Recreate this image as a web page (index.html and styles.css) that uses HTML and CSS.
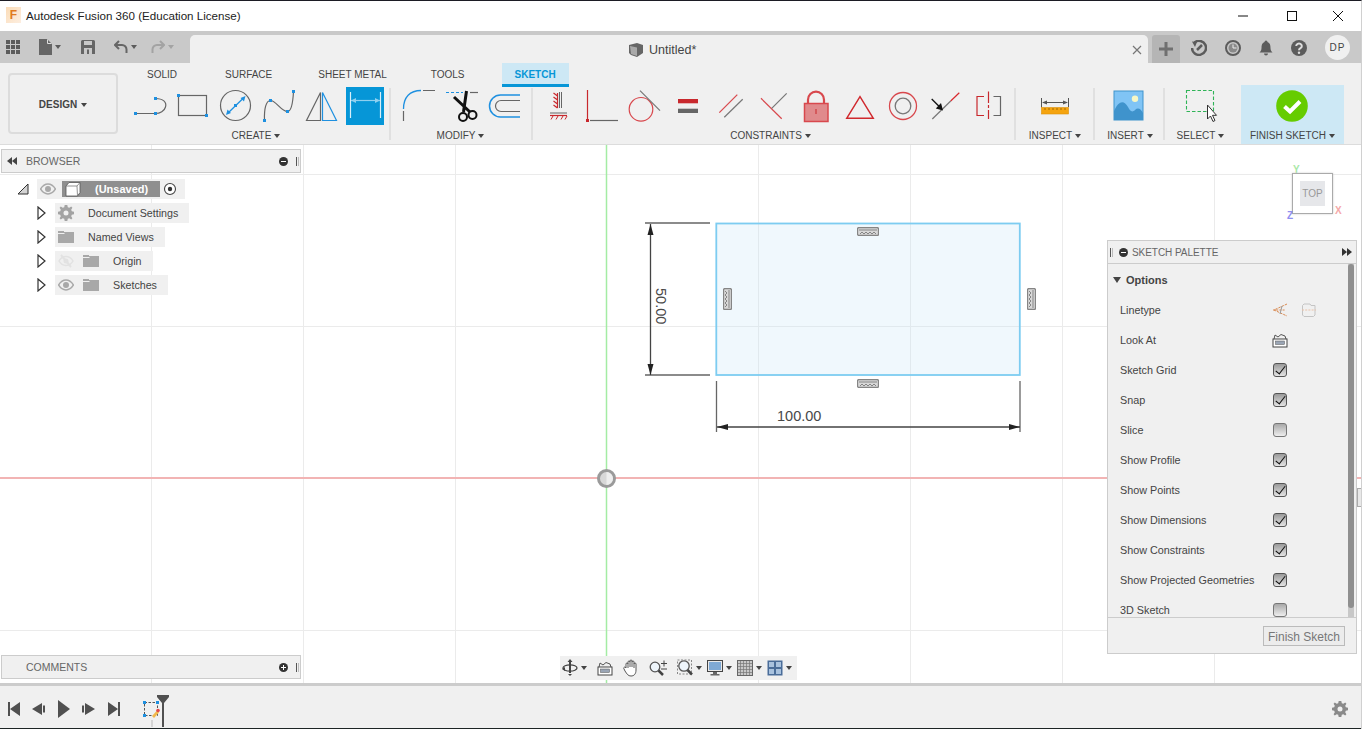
FILE: index.html
```html
<!DOCTYPE html>
<html lang="en">
<head>
<meta charset="utf-8">
<title>Autodesk Fusion 360 (Education License)</title>
<link rel="stylesheet" href="styles.css">
</head>
<body>
<svg class="defs" aria-hidden="true">
  <symbol id="eye" viewBox="0 0 16 12"><path d="M0.5 6C3 2 5.5 1 8 1s5 1 7.500 5C13 10 10.500 11 8 11S3 10 0.500 6Z" fill="none" stroke="#a8a8a8" stroke-width="1.500"/><circle cx="8" cy="6" r="3" fill="#a8a8a8"/></symbol>
  <symbol id="eyeoff" viewBox="0 0 16 14"><path d="M1 7C3 3.500 5.500 2.500 8 2.500s5 1 7 4.500C13 10.500 10.500 11.500 8 11.500S3 10.500 1 7Z" fill="none" stroke="#e2e2e2" stroke-width="1.500"/><circle cx="8" cy="7" r="2.500" fill="#e2e2e2"/><path d="M3 1l10 12" stroke="#e2e2e2" stroke-width="2"/></symbol>
  <symbol id="folder" viewBox="0 0 16 12"><path d="M0 0H6V1H16V3H7L6 2H0Z" fill="#a8a8a8"/><path d="M0 3H16V12H0Z" fill="#a8a8a8"/></symbol>
  <symbol id="lookat" viewBox="0 0 16 16"><path d="M2 7L3 3L6 5L9 2.500L13 4L14 7" fill="none" stroke="#555" stroke-width="1"/><rect x="1" y="7" width="14" height="8" fill="#fff" stroke="#444"/><rect x="3.500" y="9" width="9" height="3.500" fill="#9aa5b5" stroke="#555" stroke-width="0.500"/></symbol>
  <symbol id="tick" viewBox="0 0 22 9"><rect x="0.500" y="0.500" width="21" height="8" rx="1.500" fill="#d8d8d8" stroke="#858585" stroke-width="1.300"/><path d="M2 3H20" stroke="#858585"/><path d="M3 7l2-2 2 2 2-2 2 2 2-2 2 2 2-2 2 2" fill="none" stroke="#858585" stroke-width="1"/></symbol>
</svg>

<div class="app">
  <header class="titlebar">
    <span class="app-logo">F</span>
    <span class="app-title">Autodesk Fusion 360 (Education License)</span>
    <div class="win-controls">
      <svg class="win-min" width="12" height="12" viewBox="0 0 12 12"><path d="M1 6H11" stroke="#111"/></svg>
      <svg class="win-max" width="12" height="12" viewBox="0 0 12 12"><rect x="1.500" y="1.500" width="9" height="9" fill="none" stroke="#111"/></svg>
      <svg class="win-close" width="12" height="12" viewBox="0 0 12 12"><path d="M1 1L11 11M11 1L1 11" stroke="#111"/></svg>
    </div>
  </header>

  <div class="quickbar">
    <div class="qa">
      <svg class="qa-grid" width="14" height="14" viewBox="0 0 14 14" fill="#5c5c5c"><path d="M0 0h4v4H0zM5 0h4v4H5zM10 0h4v4h-4zM0 5h4v4H0zM5 5h4v4H5zM10 5h4v4h-4zM0 10h4v4H0zM5 10h4v4H5zM10 10h4v4h-4z"/></svg>
      <svg class="qa-file" width="13" height="16" viewBox="0 0 13 16"><path d="M0 0H8L13 5V16H0Z" fill="#666"/><path d="M8.500 0.500V4.500H12.500" fill="none" stroke="#ddd"/></svg>
      <span class="caret qa-caret"></span>
      <svg class="qa-save" width="14" height="14" viewBox="0 0 14 14"><path d="M0 1.500A1.500 1.500 0 0 1 1.500 0H12.500A1.500 1.500 0 0 1 14 1.500V14H0Z" fill="#666"/><rect x="3" y="1" width="8" height="4" fill="#c9c9c9"/><rect x="3" y="8" width="8" height="6" fill="#c9c9c9"/><rect x="6" y="9.500" width="2" height="4.500" fill="#666"/></svg>
      <svg class="qa-undo" width="14" height="14" viewBox="0 0 14 14"><path d="M5 1L1 5L5 9M1 5H8A4.500 4.500 0 0 1 12.500 9.500V13" fill="none" stroke="#666" stroke-width="2"/></svg>
      <span class="caret qa-caret"></span>
      <svg class="qa-redo" width="14" height="14" viewBox="0 0 14 14"><path d="M9 1L13 5L9 9M13 5H6A4.500 4.500 0 0 0 1.500 9.500V13" fill="none" stroke="#a3a3a3" stroke-width="2"/></svg>
      <span class="caret caret-dim qa-caret"></span>
    </div>
    <div class="doc-tab">
      <svg class="doc-cube" width="16" height="16" viewBox="0 0 16 16"><path d="M1 3L9 1L15 3L15 11L9 15L3 13L1 11Z" fill="#666"/><path d="M2 4L9 5.500V14L3 12Z" fill="#a9a9a9"/></svg>
      <span class="doc-name">Untitled*</span>
      <svg class="doc-close" width="10" height="10" viewBox="0 0 10 10"><path d="M1 1L9 9M9 1L1 9" stroke="#777" stroke-width="1.200"/></svg>
    </div>
    <div class="new-tab"><svg width="14" height="14" viewBox="0 0 14 14"><path d="M7 0V14M0 7H14" stroke="#707070" stroke-width="3"/></svg></div>
    <svg class="top-icon top-first" width="16" height="16" viewBox="0 0 16 16"><path d="M3.500 2.500A7 7 0 1 1 1 8" fill="none" stroke="#5c5c5c" stroke-width="2.500"/><path d="M1 1.500L6 2L4 7Z" fill="#5c5c5c"/><path d="M6 10L11 5" stroke="#5c5c5c" stroke-width="2.500"/></svg>
    <svg class="top-icon" width="16" height="16" viewBox="0 0 16 16"><circle cx="8" cy="8" r="7" fill="none" stroke="#5c5c5c" stroke-width="2"/><circle cx="8" cy="8" r="4.500" fill="#8a8a8a"/><path d="M8 4.500V8H11.500" fill="none" stroke="#eee"/></svg>
    <svg class="top-icon" width="16" height="16" viewBox="0 0 16 16"><path d="M8 0.500A1.500 1.500 0 0 1 9.500 2C12 3 12.500 5 12.500 8C12.500 10 13.500 11.500 14.500 12.500H1.500C2.500 11.500 3.500 10 3.500 8C3.500 5 4 3 6.500 2A1.500 1.500 0 0 1 8 0.500ZM6 13.500H10A2 2 0 0 1 6 13.500Z" fill="#5c5c5c"/></svg>
    <svg class="top-icon" width="16" height="16" viewBox="0 0 16 16"><circle cx="8" cy="8" r="8" fill="#5c5c5c"/><path d="M5.200 6A2.800 2.500 0 1 1 9.500 8.200C8.500 8.800 8 9.200 8 10.200" fill="none" stroke="#ddd" stroke-width="2"/><circle cx="8" cy="12.700" r="1.200" fill="#ddd"/></svg>
    <span class="avatar">DP</span>
  </div>

  <nav class="ribbon">
    <button class="design-btn">DESIGN<span class="caret caret-design"></span></button>
    <div class="ribbon-main">
      <div class="tabs">
        <span class="tab">SOLID</span>
        <span class="tab">SURFACE</span>
        <span class="tab">SHEET METAL</span>
        <span class="tab">TOOLS</span>
        <span class="tab tab-active">SKETCH</span>
      </div>
      <div class="groups">
        <div class="group">
          <div class="tools">
            <svg class="tool" viewBox="0 0 38 38"><path d="M4.500 26.500H24.500M24.500 11.500C32 11.500 36 15 34.500 20C33.500 24 29 26.500 24.500 26.500" fill="none" stroke="#666" stroke-width="1.200"/><path class="blue" d="M3 25h3v3H3zM23 25h3v3h-3zM23 10h3v3h-3z"/></svg>
            <svg class="tool" viewBox="0 0 38 38"><rect x="4.500" y="8.500" width="28" height="20" fill="none" stroke="#666" stroke-width="1.200"/><path class="blue" d="M3 7h3v3H3zM31 27h3v3h-3z"/></svg>
            <svg class="tool" viewBox="0 0 38 38"><circle cx="18.500" cy="18.500" r="15" fill="none" stroke="#666" stroke-width="1.200"/><path d="M11 26L26.500 11" stroke="#1e90e0" stroke-width="1.300"/><path class="blue" d="M9 28L10.500 22.500L14 26ZM28.500 9L27 14.500L23.500 11ZM17 17h3v3h-3z"/></svg>
            <svg class="tool" viewBox="0 0 38 38"><path d="M4.500 33.500C4 22 6 13.500 10.500 13.500C16 13.500 21 24.500 27.500 24.500C32 24.500 33 14 33.500 4.500" fill="none" stroke="#666" stroke-width="1.200"/><path class="blue" d="M3 32h3v3H3zM9 12h3v3H9zM26 23h3v3h-3zM32 3h3v3h-3z"/></svg>
            <svg class="tool" viewBox="0 0 38 38"><path d="M17.500 5.500L3.500 33.500H17.500Z" fill="none" stroke="#666" stroke-width="1.200"/><path d="M19.500 5.500L33.500 33.500H19.500Z" fill="none" stroke="#1e90e0" stroke-width="1.200"/></svg>
            <svg class="tool tool-active" viewBox="0 0 38 38"><rect width="38" height="38" fill="#0696d7"/><path d="M4.500 5V31M34.500 5V31" stroke="#d7eef9" stroke-width="1.200"/><path d="M5 13.500H34" stroke="#8fd0ef" stroke-width="1.200"/><path d="M5 13.500L10 11V16ZM34 13.500L29 11V16Z" fill="#8fd0ef"/></svg>
          </div>
          <div class="group-label">CREATE<span class="caret"></span></div>
        </div>
        <span class="sep sep-a"></span>
        <div class="group">
          <div class="tools">
            <svg class="tool" viewBox="0 0 38 38"><path d="M3.500 34V24M23 3.500H35" fill="none" stroke="#666" stroke-width="1.200"/><path d="M3.500 22C3.500 10 10 3.500 21 3.500" fill="none" stroke="#1e90e0" stroke-width="1.300"/></svg>
            <svg class="tool" viewBox="0 0 38 38"><path d="M3 5.500H20" fill="none" stroke="#1e90e0" stroke-width="1.200" stroke-dasharray="3 2"/><path d="M27 5.500H35" stroke="#666" stroke-width="1.200"/><path d="M11 10L27 25M23.500 4L20.500 25" fill="none" stroke="#111" stroke-width="3"/><circle cx="20" cy="30" r="4" fill="none" stroke="#111" stroke-width="2"/><circle cx="29.500" cy="28" r="4" fill="none" stroke="#111" stroke-width="2"/></svg>
            <svg class="tool" viewBox="0 0 38 38"><path d="M34 8H14.500A11 11 0 0 0 14.500 30H34" fill="none" stroke="#1e90e0" stroke-width="1.500"/><path d="M34 13.500H15A5.500 5.500 0 0 0 15 24.500H34" fill="none" stroke="#666" stroke-width="1.200"/></svg>
          </div>
          <div class="group-label">MODIFY<span class="caret"></span></div>
        </div>
        <span class="sep sep-b"></span>
        <div class="group group-constraints">
          <div class="tools">
            <svg class="tool" viewBox="0 0 38 38"><path d="M14.500 6l4 3M14.500 10l4 3M14.500 14l4 3M14.500 18l4 3M18.500 6V21" fill="none" stroke="#c8282d" stroke-width="1.200"/><path d="M20.500 5V21M22.500 5V21M11 26H28" stroke="#666" stroke-width="1"/><path d="M11 28.500H28" stroke="#c8282d" stroke-width="1.200"/><path d="M14 29l-2 3.500M19 29l-2 3.500M24 29l-2 3.500M28 29l-2 3.500" stroke="#c8282d"/></svg>
            <svg class="tool" viewBox="0 0 38 38"><path d="M5.500 3V32" stroke="#c8282d" stroke-width="1.200"/><path d="M4 32h3v3H4z" fill="#c8282d"/><path d="M8 33.500H36" stroke="#666" stroke-width="1.200"/></svg>
            <svg class="tool" viewBox="0 0 38 38"><circle cx="16" cy="22.300" r="11.800" fill="none" stroke="#d8484d" stroke-width="1.200"/><path d="M15 3.700L35 23.700" stroke="#777" stroke-width="1.200"/></svg>
            <svg class="tool" viewBox="0 0 38 38"><path d="M10 12h20v4.300H10z" fill="#c8282d"/><path d="M10 21.700h20v4.300H10z" fill="#666"/></svg>
            <svg class="tool" viewBox="0 0 38 38"><path d="M8.300 25.700L26.300 7.700" stroke="#d8484d" stroke-width="1.200"/><path d="M13.300 30.300L31.700 12.300" stroke="#777" stroke-width="1.200"/></svg>
            <svg class="tool" viewBox="0 0 38 38"><path d="M7 11.300L27.700 31.700" stroke="#d8484d" stroke-width="1.200"/><path d="M17.700 21.300L32.700 6.300" stroke="#777" stroke-width="1.200"/></svg>
            <svg class="tool" viewBox="0 0 38 38"><path d="M11 16V12.700A8 8 0 0 1 27 12.700V16" fill="none" stroke="#d8484d" stroke-width="2.200"/><rect x="7.500" y="16.500" width="23.500" height="18" fill="#e08a8c" stroke="#d8484d" stroke-width="1.500"/><path d="M19 22V27" stroke="#c8282d"/></svg>
            <svg class="tool" viewBox="0 0 38 38"><path d="M6.700 31.300H33.300L20 9.700Z" fill="none" stroke="#d0282d" stroke-width="1.400"/></svg>
            <svg class="tool" viewBox="0 0 38 38"><circle cx="20" cy="19" r="13.500" fill="none" stroke="#d8484d" stroke-width="1.300"/><circle cx="20" cy="19" r="7.800" fill="none" stroke="#777" stroke-width="1.300"/></svg>
            <svg class="tool" viewBox="0 0 38 38"><path d="M6.300 32L24.700 14" stroke="#777" stroke-width="1.200"/><path d="M24.700 14L33.300 5.700" stroke="#d8282d" stroke-width="1.200"/><path d="M5.700 12L14 20.300" stroke="#111" stroke-width="1.300"/><path d="M17 23.500L9.800 21.500L15 16Z" fill="#111"/></svg>
            <svg class="tool" viewBox="0 0 38 38"><path d="M15 9.500H8V28.500H15" fill="none" stroke="#c8282d" stroke-width="1.200"/><path d="M24.500 9.500H31.500V28.500H24.500" fill="none" stroke="#666" stroke-width="1.200"/><path d="M19.500 4.500V16M19.500 18V21M19.500 23V32" stroke="#c8282d" stroke-width="1.200"/></svg>
          </div>
          <div class="group-label">CONSTRAINTS<span class="caret"></span></div>
        </div>
        <span class="sep sep-c"></span>
        <div class="group group-inspect">
          <svg class="tool" viewBox="0 0 38 38"><path d="M5.500 11V20M32.500 11V20M7 15.500H31" fill="none" stroke="#555" stroke-width="1"/><path d="M6 15.500L11 13.500V17.500ZM32 15.500L27 13.500V17.500Z" fill="#555"/><rect x="5.500" y="20.500" width="27" height="6.500" fill="#f5a40f" stroke="#dd8f08" stroke-width="0.600"/><path d="M9 21V23M13 21V23M17 21V23M21 21V23M25 21V23M29 21V23" stroke="#8a5a00" stroke-width="0.800"/></svg>
          <div class="group-label">INSPECT<span class="caret"></span></div>
        </div>
        <span class="sep sep-d"></span>
        <div class="group group-insert">
          <svg class="tool" viewBox="0 0 38 38"><rect x="3" y="4" width="29" height="29" fill="#80c4f5" stroke="#3f93cc"/><circle cx="24" cy="11.800" r="3.200" fill="#f7f7c5"/><path d="M3 24C8 13 13 13 17 20C19 24 21 26 24 23C27 20 30 22 32 26V33H3Z" fill="#3f93cc"/></svg>
          <div class="group-label">INSERT<span class="caret"></span></div>
        </div>
        <span class="sep sep-e"></span>
        <div class="group group-select">
          <svg class="tool" viewBox="0 0 38 38"><rect x="4.500" y="3.500" width="27" height="21" fill="none" stroke="#2fb457" stroke-width="1.100" stroke-dasharray="3.500 2"/><path d="M25.500 18V32L28.500 29L31 34.500L33 33.500L30.500 28.300H34.500Z" fill="#fff" stroke="#333" stroke-width="1"/></svg>
          <div class="group-label">SELECT<span class="caret"></span></div>
        </div>
        <div class="finish">
          <svg class="finish-icon" width="32" height="32" viewBox="0 0 32 32"><circle cx="16" cy="16" r="15.800" fill="#66cc00"/><path d="M8.500 16.500L14 21.500L24 11.500" fill="none" stroke="#fff" stroke-width="4"/></svg>
          <div class="group-label">FINISH SKETCH<span class="caret"></span></div>
        </div>
      </div>
    </div>
  </nav>

  <main class="viewport">
    <svg class="canvas" width="1361" height="538" viewBox="0 145 1361 538">
      <g stroke="#ebebeb" stroke-width="1">
        <path d="M151.500 145V683M303.500 145V683M455.500 145V683M758.500 145V683M910.500 145V683M1062.500 145V683M1214.500 145V683"/>
        <path d="M0 174.500H1361M0 326.500H1361M0 630.500H1361"/>
      </g>
      <path d="M0 478H1361" stroke="#f2b4b4" stroke-width="2"/>
      <path d="M606.500 145V683" stroke="#a4eca4" stroke-width="1.500"/>
      <circle cx="606.500" cy="478.500" r="8" fill="#d8d8d8" stroke="#9a9a9a" stroke-width="3"/>
      <path d="M606.500 472A6.500 6.500 0 0 1 606.500 485Z" fill="#eee"/>

      <rect x="716.300" y="223.500" width="303.500" height="151.500" fill="#bfe1f7" fill-opacity="0.240" stroke="#7dccf1" stroke-width="1.800"/>

      <g stroke="#666" stroke-width="1.300" fill="none">
        <path d="M645 223H710M645 375H710"/>
        <path d="M716.500 381V432M1020 381V432"/>
      </g>
      <path d="M650.500 224V375M717 427H1020" stroke="#444" stroke-width="1.300" fill="none"/>
      <path d="M650.500 224L653.500 235H647.500ZM650.500 375L653.500 364H647.500ZM717 427L728 424V430ZM1020 427L1009 424V430Z" fill="#222"/>
      <text class="dim" x="777" y="421">100.00</text>
      <text class="dim" transform="translate(656 288) rotate(90)">50.00</text>
      <use href="#tick" x="857" y="227" width="22" height="9"/>
      <use href="#tick" x="857" y="379" width="22" height="9"/>
      <use href="#tick" transform="translate(732 288) rotate(90)" width="22" height="9"/>
      <use href="#tick" transform="translate(1036 288) rotate(90)" width="22" height="9"/>
    </svg>

    <section class="panel browser">
      <div class="panel-head">
        <svg width="10" height="8" viewBox="0 0 10 8" class="rewind"><path d="M5 0V8L0 4ZM10 0V8L5 4Z" fill="#444"/></svg>
        <span class="panel-title">BROWSER</span>
        <span class="round-btn"></span>
        <span class="grip"></span>
      </div>
      <div class="tree">
        <div class="tree-row tree-root">
          <svg class="twist" width="12" height="12" viewBox="0 0 12 12"><path d="M1 11L11 1V11Z" fill="#d4d4d4" stroke="#333"/></svg>
          <div class="chip chip-root">
            <svg class="ic" width="16" height="12"><use href="#eye"/></svg>
            <div class="chip-sel">
              <svg width="16" height="16" viewBox="0 0 16 16"><path d="M1 5L4 1.500H15V11.500L12.500 15H1Z" fill="#fff" stroke="#555" stroke-width="0.800"/><path d="M1 5H12L12.500 15M12 5L15 1.500" fill="none" stroke="#777" stroke-width="0.800"/></svg>
              <span class="root-name">(Unsaved)</span>
            </div>
          </div>
          <svg class="radio" width="14" height="14" viewBox="0 0 14 14"><circle cx="7" cy="7" r="5.500" fill="#fff" stroke="#444" stroke-width="1.100"/><circle cx="7" cy="7" r="2.200" fill="#333"/></svg>
        </div>
        <div class="tree-row">
          <svg class="twist-r" width="9" height="14" viewBox="0 0 9 14"><path d="M1 1L8 7L1 13Z" fill="#fff" stroke="#333" stroke-width="1.200"/></svg>
          <div class="chip">
            <svg class="ic" width="16" height="16" viewBox="0 0 16 16"><path d="M6.700 0H9.300L9.800 2.200L11.300 2.800L13.200 1.600L14.400 2.800L13.200 4.700L13.800 6.200L16 6.700V9.300L13.800 9.800L13.200 11.300L14.400 13.200L13.200 14.400L11.300 13.200L9.800 13.800L9.300 16H6.700L6.200 13.800L4.700 13.200L2.800 14.400L1.600 13.200L2.800 11.300L2.200 9.800L0 9.300V6.700L2.200 6.200L2.800 4.700L1.600 2.800L2.800 1.600L4.700 2.800L6.200 2.200ZM8 5.500A2.500 2.500 0 1 0 8 10.500A2.500 2.500 0 1 0 8 5.500Z" fill="#a3a3a3" fill-rule="evenodd"/></svg>
            <span class="chip-text">Document Settings</span>
          </div>
        </div>
        <div class="tree-row">
          <svg class="twist-r" width="9" height="14" viewBox="0 0 9 14"><path d="M1 1L8 7L1 13Z" fill="#fff" stroke="#333" stroke-width="1.200"/></svg>
          <div class="chip">
            <svg class="ic" width="16" height="12"><use href="#folder"/></svg>
            <span class="chip-text">Named Views</span>
          </div>
        </div>
        <div class="tree-row">
          <svg class="twist-r" width="9" height="14" viewBox="0 0 9 14"><path d="M1 1L8 7L1 13Z" fill="#fff" stroke="#333" stroke-width="1.200"/></svg>
          <div class="chip">
            <svg class="ic" width="16" height="14"><use href="#eyeoff"/></svg>
            <svg class="ic ic-second" width="16" height="12"><use href="#folder"/></svg>
            <span class="chip-text">Origin</span>
          </div>
        </div>
        <div class="tree-row">
          <svg class="twist-r" width="9" height="14" viewBox="0 0 9 14"><path d="M1 1L8 7L1 13Z" fill="#fff" stroke="#333" stroke-width="1.200"/></svg>
          <div class="chip">
            <svg class="ic" width="16" height="12"><use href="#eye"/></svg>
            <svg class="ic ic-second" width="16" height="12"><use href="#folder"/></svg>
            <span class="chip-text">Sketches</span>
          </div>
        </div>
      </div>
    </section>

    <section class="panel comments">
      <div class="panel-head">
        <span class="panel-title panel-title-c">COMMENTS</span>
        <span class="round-btn round-plus"></span>
        <span class="grip"></span>
      </div>
    </section>

    <div class="navbar">
      <div class="nav-item">
        <svg width="16" height="18" viewBox="0 0 16 18"><path d="M8 0L10.500 3H9V14H7V3H5.500ZM8 17L6 15H10Z" fill="#444"/><ellipse cx="8" cy="9" rx="7" ry="3.200" fill="none" stroke="#444" stroke-width="1.300"/><path d="M0 10L3 8V12Z" fill="#444"/></svg><span class="caret"></span>
      </div>
      <div class="nav-item nav-wide"><svg width="16" height="16"><use href="#lookat"/></svg></div>
      <div class="nav-item nav-wide"><svg width="16" height="18" viewBox="0 0 16 18"><path d="M3 9V5A1 1 0 0 1 5 5V3A1 1 0 0 1 7 3V2A1 1 0 0 1 9 2V3A1 1 0 0 1 11 3V5A1 1 0 0 1 13 5V11C13 15 11 17 8 17C5 17 4 15 2 12L0.800 9.500C0.500 8 2 7.500 3 9ZM5 5V9M7 3V8M9 3V8M11 5V9" fill="#fff" stroke="#444" stroke-width="0.900"/></svg></div>
      <div class="nav-item nav-wide"><svg width="18" height="16" viewBox="0 0 18 16"><circle cx="6" cy="7" r="4.800" fill="#eef5fb" stroke="#555" stroke-width="1.300"/><path d="M9.500 10.500L14 15" stroke="#444" stroke-width="2.500"/><path d="M12 3.500H18M15 0.500V6.500M12 9H18" stroke="#444"/></svg></div>
      <div class="nav-item nav-wide"><svg width="16" height="18" viewBox="0 0 16 18"><rect x="0.500" y="1" width="14" height="14" fill="none" stroke="#888" stroke-dasharray="2 1.500"/><circle cx="7" cy="7" r="5.200" fill="#eef5fb" stroke="#555" stroke-width="1.300"/><path d="M10.500 11L15 15.500" stroke="#444" stroke-width="2.500"/></svg><span class="caret"></span></div>
      <div class="nav-item"><svg width="16" height="16" viewBox="0 0 16 16"><rect x="0.500" y="0.500" width="15" height="11" fill="#e8e8e8" stroke="#444"/><rect x="2" y="2" width="12" height="8" fill="#7fa9d4"/><path d="M6 12H10V14H12.500V15.500H3.500V14H6Z" fill="#666"/></svg><span class="caret"></span></div>
      <div class="nav-item"><svg width="16" height="16" viewBox="0 0 16 16"><rect x="0.500" y="0.500" width="15" height="15" fill="#c8c8c8" stroke="#666"/><path d="M3.500 1V15M6.500 1V15M9.500 1V15M12.500 1V15M1 3.500H15M1 6.500H15M1 9.500H15M1 12.500H15" stroke="#777" stroke-width="0.700"/></svg><span class="caret"></span></div>
      <div class="nav-item"><svg width="16" height="16" viewBox="0 0 16 16"><rect x="0.500" y="0.500" width="15" height="15" fill="#4a6d99"/><g fill="#a9c2de" stroke="#4a6d99"><rect x="1.500" y="1.500" width="6" height="6"/><rect x="8.500" y="1.500" width="6" height="6"/><rect x="1.500" y="8.500" width="6" height="6"/><rect x="8.500" y="8.500" width="6" height="6"/></g></svg><span class="caret"></span></div>
    </div>

    <div class="viewcube">
      <span class="axis axis-y">Y</span>
      <div class="cube-face"><span class="cube-top">TOP</span></div>
      <span class="axis axis-z">Z</span>
      <span class="axis axis-x">X</span>
    </div>

    <section class="palette">
      <div class="palette-head">
        <span class="grip grip-left"></span>
        <span class="round-btn"></span>
        <span class="panel-title palette-title">SKETCH PALETTE</span>
        <svg class="forward" width="10" height="8" viewBox="0 0 10 8"><path d="M0 0V8L5 4ZM5 0V8L10 4Z" fill="#333"/></svg>
      </div>
      <div class="palette-body">
        <div class="palette-list">
          <div class="opt-head"><span class="opt-tri"></span>Options</div>
          <div class="opt"><span class="opt-label">Linetype</span>
            <span class="opt-ctl">
              <svg width="16" height="16" viewBox="0 0 16 16"><path d="M15 2L2 8L15 14" fill="none" stroke="#d98a52" stroke-dasharray="2.500 1"/><path d="M1 8H13" stroke="#d98a52" stroke-dasharray="2 1.200"/><path d="M10 4L8 12" stroke="#999"/></svg>
              <svg class="opt-second" width="16" height="16" viewBox="0 0 16 16"><path d="M3 2H9L10 3.500H14V13L12.500 14.500H3L1.500 13V3.500Z" fill="none" stroke="#c4c4c4"/><path d="M1 8H15" stroke="#eac2a8" stroke-dasharray="2 1.200"/></svg>
            </span>
          </div>
          <div class="opt"><span class="opt-label">Look At</span><span class="opt-ctl"><svg width="16" height="16"><use href="#lookat"/></svg></span></div>
          <div class="opt"><span class="opt-label">Sketch Grid</span><span class="opt-ctl"><span class="check on"></span></span></div>
          <div class="opt"><span class="opt-label">Snap</span><span class="opt-ctl"><span class="check on"></span></span></div>
          <div class="opt"><span class="opt-label">Slice</span><span class="opt-ctl"><span class="check"></span></span></div>
          <div class="opt"><span class="opt-label">Show Profile</span><span class="opt-ctl"><span class="check on"></span></span></div>
          <div class="opt"><span class="opt-label">Show Points</span><span class="opt-ctl"><span class="check on"></span></span></div>
          <div class="opt"><span class="opt-label">Show Dimensions</span><span class="opt-ctl"><span class="check on"></span></span></div>
          <div class="opt"><span class="opt-label">Show Constraints</span><span class="opt-ctl"><span class="check on"></span></span></div>
          <div class="opt"><span class="opt-label">Show Projected Geometries</span><span class="opt-ctl"><span class="check on"></span></span></div>
          <div class="opt"><span class="opt-label">3D Sketch</span><span class="opt-ctl"><span class="check"></span></span></div>
        </div>
        <div class="scroll-track"><div class="scroll-thumb"></div></div>
      </div>
      <div class="palette-foot"><span class="finish-btn">Finish Sketch</span></div>
    </section>
    <span class="edge-tab"></span>
  </main>

  <footer class="timeline">
    <div class="tl-controls">
      <svg width="12" height="14" viewBox="0 0 12 14"><path d="M0 0H2V14H0ZM12 0V14L2 7Z" fill="#505050"/></svg>
      <svg class="tl-prev" width="13" height="12" viewBox="0 0 13 12"><path d="M10 0V12L0 6ZM11 2.500H13V9.500H11Z" fill="#505050"/></svg>
      <svg class="tl-play" width="12" height="18" viewBox="0 0 12 18"><path d="M0 0L12 9L0 18Z" fill="#505050"/></svg>
      <svg class="tl-next" width="13" height="12" viewBox="0 0 13 12"><path d="M3 0V12L13 6ZM0 2.500H2V9.500H0Z" fill="#505050"/></svg>
      <svg class="tl-last" width="12" height="14" viewBox="0 0 12 14"><path d="M12 0H10V14H12ZM0 0V14L10 7Z" fill="#505050"/></svg>
    </div>
    <div class="tl-track">
      <svg width="28" height="36" viewBox="0 0 28 36"><rect x="2.500" y="10.500" width="13" height="13" fill="none" stroke="#555" stroke-dasharray="2.500 1.500"/><path d="M1 9h3v3H1zM14 9h3v3h-3zM1 22h3v3H1z" fill="#1e90e0"/><path d="M10 24L15 18.500L17 20.500L12 26Z" fill="#f2b84b"/><circle cx="16" cy="18.500" r="1.800" fill="#e24a4a"/><path d="M9 28H11V35H9Z" fill="#d4d4d4"/><path d="M15 3H27V5L22 11V35H20V11L15 5Z" fill="#505050"/></svg>
    </div>
    <svg class="tl-gear" width="16" height="16" viewBox="0 0 16 16"><path d="M6.700 0H9.300L9.800 2.200L11.300 2.800L13.200 1.600L14.400 2.800L13.200 4.700L13.800 6.200L16 6.700V9.300L13.800 9.800L13.200 11.300L14.400 13.200L13.200 14.400L11.300 13.200L9.800 13.800L9.300 16H6.700L6.200 13.800L4.700 13.200L2.800 14.400L1.600 13.200L2.800 11.300L2.200 9.800L0 9.300V6.700L2.200 6.200L2.800 4.700L1.600 2.800L2.800 1.600L4.700 2.800L6.200 2.200ZM8 5.500A2.500 2.500 0 1 0 8 10.500A2.500 2.500 0 1 0 8 5.500Z" fill="#8a8a8a" fill-rule="evenodd"/></svg>
  </footer>
</div>
</body>
</html>
```

FILE: styles.css
```css
* { box-sizing: border-box; }
html, body { margin: 0; padding: 0; height: 100%; overflow: hidden; background: #fff; }
body { font-family: "Liberation Sans", Arial, sans-serif; color: #444; font-size: 11px; }
.defs { position: absolute; width: 0; height: 0; }
svg { display: block; flex: none; }

.app {
  width: 1362px; height: 729px; display: flex; flex-direction: column;
  border-top: 1px solid #1c1c24; border-right: 1px solid #d0d0d0;
}

/* title bar */
.titlebar { height: 30px; flex: none; display: flex; align-items: center; background: #fff; padding: 0 0 2px 6px; }
.app-logo {
  width: 15px; height: 16px; margin-right: 5px; background: linear-gradient(135deg, #fbdcb8, #fdeee0);
  color: #e07a1e; font-weight: 700; font-size: 12px; line-height: 16px; text-align: center;
}
.app-title { font-size: 11.600px; color: #222; white-space: nowrap; }
.win-controls { margin-left: auto; display: flex; align-items: center; padding-right: 17px; position: relative; top: 1px; }
.win-max { margin-left: 37px; }
.win-close { margin-left: 34px; }

/* quick access + document tab */
.quickbar { height: 32px; flex: none; display: flex; align-items: flex-end; background: #c9c9c9; }
.qa { width: 190px; height: 32px; display: flex; align-items: center; padding-left: 6px; flex: none; }
.qa-file { margin-left: 19px; }
.qa-caret { margin: 0 0 0 6px; }
.qa-save { margin-left: 20px; }
.qa-undo { margin-left: 19px; }
.qa-redo { margin-left: 14px; }
.caret {
  display: inline-block; width: 0; height: 0; flex: none; border-left: 3px solid transparent; border-right: 3px solid transparent;
  border-top: 4px solid #444; margin-left: 3px; vertical-align: 1px;
}
.qa .caret { border-top-color: #5c5c5c; }
.qa .caret-dim { border-top-color: #a3a3a3; }
.doc-tab {
  width: 958px; height: 28px; background: #f0f0f0; border-radius: 5px 5px 0 0; display: flex; align-items: center;
  padding: 1px 0 0 438px; flex: none;
}
.doc-name { font-size: 12.500px; color: #444; margin-left: 5px; }
.doc-close { margin-left: auto; margin-right: 6px; }
.new-tab {
  width: 28px; height: 28px; background: #b5b5b5; border-radius: 3px 3px 0 0; margin-left: 4px; flex: none;
  display: flex; align-items: center; justify-content: center;
}
.top-icon { margin-left: 17px; align-self: center; margin-top: 1px; }
.top-first { margin-left: 11px; }
.top-first + .top-icon { margin-left: 18px; }
.avatar {
  width: 25px; height: 25px; border-radius: 50%; background: #f0f0f0; margin-left: 18px; align-self: center;
  display: flex; align-items: center; justify-content: center; font-size: 10px; letter-spacing: 1px; color: #444;
}

/* ribbon */
.ribbon { height: 82px; flex: none; background: #f0f0f0; border-bottom: 1px solid #dcdcdc; display: flex; align-items: flex-start; }
.design-btn {
  width: 110px; height: 61px; margin: 10px 13px 0 8px; background: #f0f0f0; border: 2px solid #dcdcdc; border-radius: 4px;
  font: 700 10px "Liberation Sans", Arial, sans-serif; color: #444; flex: none; padding: 2px 0 0;
}
.caret-design { margin-left: 4px; }
.ribbon-main { flex: 1; display: flex; flex-direction: column; min-width: 0; }
.tabs { height: 24px; display: flex; gap: 20px; margin-left: 3px; flex: none; }
.tab { padding: 0 13px; font-size: 10px; line-height: 24px; color: #444; white-space: nowrap; }
.tab:nth-child(2) { margin-left: 2px; }
.tab:nth-child(4) { margin-left: -2px; }
.tab:nth-child(5) { margin-left: 4px; }
.tab-active { background: #cde8f5; color: #0696d7; font-weight: 700; border-bottom: 3px solid #0696d7; }
.groups { display: flex; align-items: flex-start; height: 57px; }
.group { display: flex; flex-direction: column; align-items: center; flex: none; }
.tools { display: flex; gap: 5px; }
.tool { width: 38px; height: 38px; }
.blue { fill: #1e90e0; }
.group-label { margin-top: 5px; height: 12px; font-size: 10px; line-height: 12px; color: #444; white-space: nowrap; padding-right: 3px; }
.group-constraints .group-label { padding-right: 5px; }
.group-inspect .group-label, .group-insert .group-label, .group-select .group-label { padding-right: 0; }
.sep { width: 2px; height: 52px; background: #e0e0e0; flex: none; }
.sep-a { margin: 1px 9px 0 5px; }
.sep-b { margin: 1px 6px 0 7px; }
.sep-c { margin: 1px 14px 0 7px; }
.sep-d { margin: 1px 13px 0 13px; }
.sep-e { margin: 1px 12px 0 11px; }
.group-inspect { width: 50px; }
.group-insert { width: 44px; }
.group-select { width: 47px; }
.finish {
  width: 103px; height: 59px; margin: -2px 0 0 17px; background: #cde8f5; display: flex; flex-direction: column; align-items: center;
  flex: none; padding-top: 5px;
}
.finish-icon { margin-left: -2px; }
.finish .group-label { margin-top: 8px; padding-right: 0; }

/* viewport */
.viewport { position: relative; height: 538px; flex: none; background: #fff; overflow: hidden; }
.canvas { position: absolute; left: 0; top: 0; }
.dim { font: 14.500px "Liberation Sans", Arial, sans-serif; fill: #484848; }

.panel { position: absolute; left: 1px; width: 300px; }
.panel-head {
  height: 24px; background: #f0f0f0; border: 1px solid #ccc; display: flex; align-items: center; padding: 0 1px 0 5px;
}
.rewind { margin-right: 9px; }
.panel-title { font-size: 10.500px; color: #666; white-space: nowrap; }
.panel-title-c { margin-left: 19px; }
.round-btn { width: 9px; height: 9px; border-radius: 50%; background: #333; margin-left: auto; position: relative; flex: none; }
.round-btn::after { content: ""; position: absolute; left: 2px; right: 2px; top: 4px; height: 1px; background: #fff; }
.round-plus::before { content: ""; position: absolute; top: 2px; bottom: 2px; left: 4px; width: 1px; background: #fff; }
.grip { width: 3px; height: 9px; border-left: 1px solid #555; border-right: 1px solid #bbb; margin-left: 8px; flex: none; }
.browser { top: 4px; }
.comments { top: 510px; }
.tree { padding-top: 6px; }
.tree-row { height: 20px; margin-bottom: 4px; display: flex; align-items: center; padding-left: 36px; }
.tree-root { padding-left: 16px; }
.twist { margin-right: 8px; }
.twist-r { margin-right: 9px; }
.chip { height: 20px; background: #f0f0f0; display: flex; align-items: center; padding: 0 11px 0 3px; }
.chip-root { width: 148px; padding: 0 0 0 3px; }
.chip-sel {
  width: 98px; height: 16px; margin-left: 6px; background: #8f8f8f; display: flex; align-items: center; padding-left: 3px;
}
.root-name { color: #fff; font-weight: 700; font-size: 11px; margin-left: 14px; white-space: nowrap; }
.radio { margin-left: -22px; }
.chip-text { margin-left: 14px; font-size: 10.700px; color: #444; white-space: nowrap; }
.ic-second { margin-left: 9px; }

.navbar {
  position: absolute; left: 560px; top: 511px; width: 237px; height: 24px; background: #f0f0f0; display: flex; align-items: center; padding-left: 2px;
}
.nav-item { display: flex; align-items: center; gap: 3px; margin-left: 5px; }
.nav-item:first-child { margin-left: 0; }
.nav-item .caret { margin-left: 0; }
.nav-wide { margin-left: 10px; }

.viewcube { position: absolute; left: 1284px; top: 20px; width: 62px; height: 58px; }
.cube-face {
  position: absolute; left: 8px; top: 8px; width: 41px; height: 41px; border: 1px solid #aaa; background: #fff;
  display: flex; align-items: center; justify-content: center; box-shadow: 0 0 2px #ccc;
}
.cube-top { width: 25px; height: 25px; background: #e6e7ea; color: #999; font-size: 10px; line-height: 25px; text-align: center; }
.axis { position: absolute; font-size: 10px; font-weight: 700; }
.axis-y { left: 9px; top: -1px; color: #a8e8a8; }
.axis-z { left: 3px; top: 45px; color: #8f8ff0; }
.axis-x { left: 51px; top: 40px; color: #f5a8a8; }

.palette {
  position: absolute; left: 1107px; top: 95px; width: 250px; height: 414px; background: #f0f0f0; border: 1px solid #ccc;
  display: flex; flex-direction: column;
}
.palette-head { height: 23px; flex: none; display: flex; align-items: center; border-bottom: 1px solid #ccc; padding-left: 2px; }
.grip-left { margin-left: 0; }
.palette-head .round-btn { margin-left: 6px; }
.palette .palette-title { margin-left: 4px; font-size: 10px; letter-spacing: -0.050px; }
.forward { margin-left: auto; margin-right: 4px; }
.palette-body { flex: 1; display: flex; min-height: 0; position: relative; }
.palette-list { flex: 1; padding-left: 12px; overflow: hidden; }
.opt-head { height: 31px; display: flex; align-items: center; font-size: 11px; font-weight: 700; color: #444; margin-left: -7px; }
.opt-tri { width: 0; height: 0; border-left: 4px solid transparent; border-right: 4px solid transparent; border-top: 6px solid #444; margin-right: 5px; }
.opt { height: 30px; display: flex; align-items: center; }
.opt-label { width: 152px; font-size: 10.800px; color: #444; white-space: nowrap; flex: none; }
.opt-ctl { display: flex; align-items: center; }
.opt-second { margin-left: 13px; }
.check {
  width: 14px; height: 14px; margin-left: 1px; border: 1px solid #555; border-radius: 3px;
  position: relative; display: block;
}
.check:not(.on) { border-color: #777; background: linear-gradient(#a8a8a8, #eeeeee); }
.check.on { background: linear-gradient(#9a9a9a, #e4e4e4); }
.check.on::after {
  content: ""; position: absolute; left: 4px; top: 0; width: 4px; height: 9px; border: solid #111; border-width: 0 1.500px 1.500px 0; transform: rotate(38deg);
}
.scroll-track { position: absolute; top: 0; right: 2px; width: 6px; bottom: 0; background: #c8c8c8; }
.scroll-thumb { height: 344px; background: #8f8f8f; border-radius: 3px; }
.palette-foot { height: 36px; flex: none; border-top: 1px solid #ccc; display: flex; justify-content: flex-end; align-items: flex-start; padding: 8px 11px 0 0; }
.finish-btn {
  width: 82px; height: 20px; border: 1px solid #bbb; background: #ececec; color: #777; font-size: 12px; line-height: 20px; text-align: center; white-space: nowrap;
}
.edge-tab { position: absolute; left: 1357px; top: 343px; width: 4px; height: 19px; background: #e8e8e8; border: 1px solid #aaa; border-right: 0; }

/* timeline */
.timeline {
  flex: 1; min-height: 0; background: #f0f0f0; border-top: 3px solid #ccc; border-bottom: 1px solid #1c2424; display: flex; align-items: center; padding-top: 4px;
}
.tl-controls { display: flex; align-items: center; padding-left: 8px; }
.tl-prev { margin-left: 12px; }
.tl-play { margin-left: 13px; }
.tl-next { margin-left: 12px; }
.tl-last { margin-left: 13px; }
.tl-track { margin-left: 22px; align-self: flex-end; }
.tl-gear { margin-left: auto; margin-right: 13px; }
```
